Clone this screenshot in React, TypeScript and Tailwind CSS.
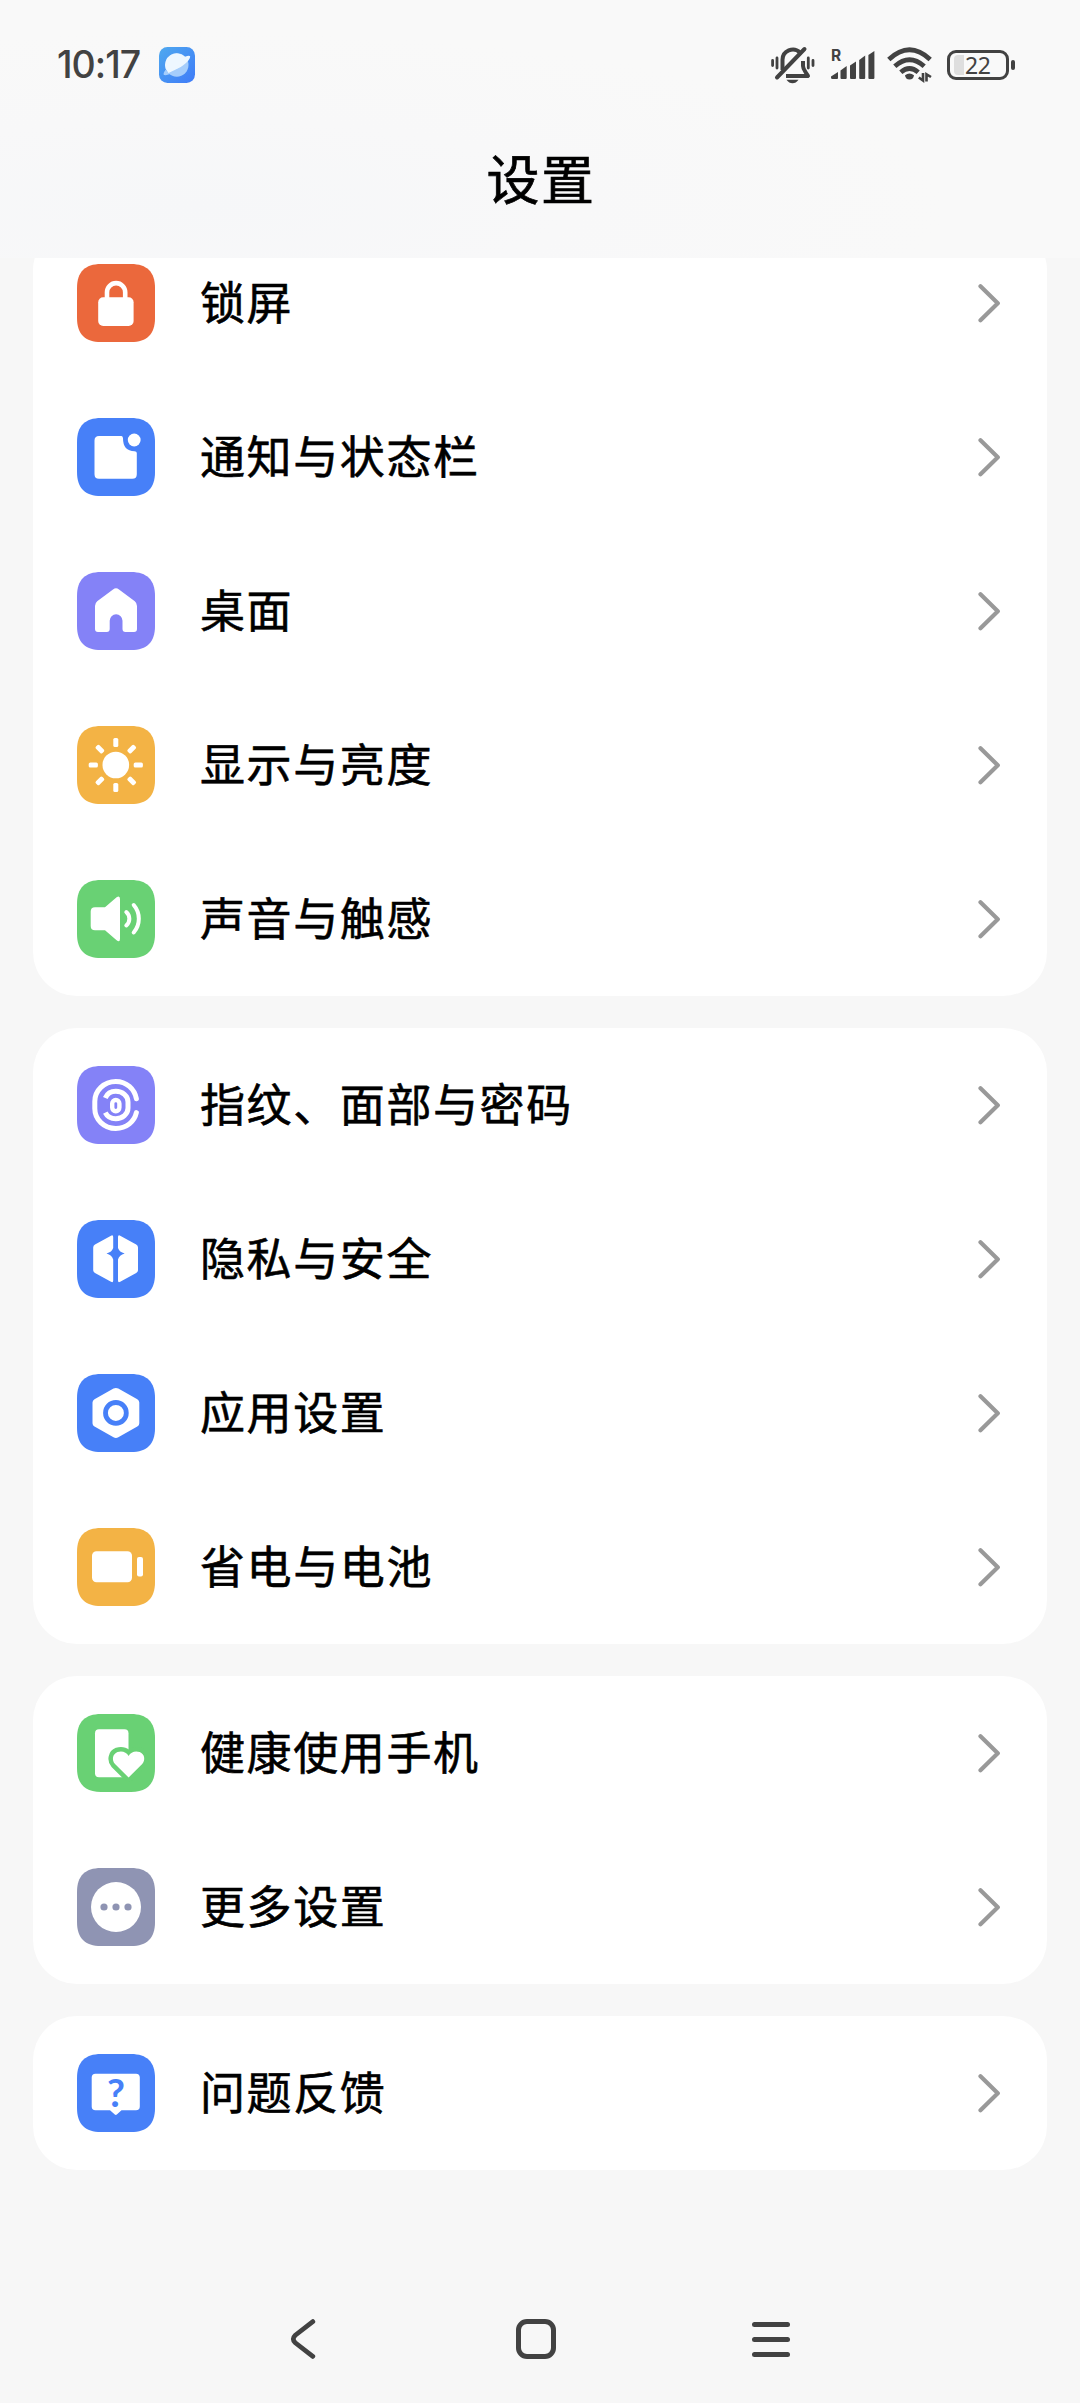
import type { ReactNode } from "react";

type Item = {
  label: string;
  color: string;
  glyph: ReactNode;
};

// All glyphs are drawn on a 78x78 tile
const LockGlyph = () => (
  <>
    <path
      d="M30 37V28.2a9.1 9.1 0 0 1 18.2 0V37"
      fill="none"
      stroke="#fff"
      strokeWidth="4.6"
    />
    <rect x="21.2" y="33.2" width="35.4" height="28.7" rx="5" fill="#fff" />
  </>
);

const NotificationGlyph = () => (
  <>
    <path
      d="M22 18H44.5Q46 18 46 20.5Q46 33 57.5 33.2Q59.8 33.3 59.8 35V56.2Q59.8 60.7 55.3 60.7H22Q17.5 60.7 17.5 56.2V22.5Q17.5 18 22 18Z"
      fill="#fff"
    />
    <circle cx="57.2" cy="22" r="6.4" fill="#fff" />
  </>
);

const HomeGlyph = () => (
  <path
    d="M36 17.4Q39 15.2 42 17.4L57.8 29.2Q60 31 60 34V57Q60 60 57 60H48.5Q45.5 60 45.5 57V48.7a6.4 6.4 0 0 0-12.8 0V57Q32.7 60 29.7 60H21Q18 60 18 57V34Q18 31 20.2 29.2Z"
    fill="#fff"
  />
);

const SunGlyph = () => (
  <g fill="#fff" transform="translate(38.8 39)">
    <circle r="13.3" />
    {[0, 45, 90, 135, 180, 225, 270, 315].map((angle) => (
      <rect
        key={angle}
        x="-2.5"
        y="-27.1"
        width="5"
        height="9.2"
        rx="1.6"
        transform={`rotate(${angle})`}
      />
    ))}
  </g>
);

const SpeakerGlyph = () => (
  <>
    <path
      d="M18 27.2H28L39.6 17.2Q43 15 43 19V58.7Q43 62.7 39.6 60.3L28 50.3H18Q13.7 50.3 13.7 46V31.5Q13.7 27.2 18 27.2Z"
      fill="#fff"
    />
    <g fill="none" stroke="#fff" strokeWidth="4" strokeLinecap="round">
      <path d="M49.3 32A9 9 0 0 1 49.3 45.5" />
      <path d="M56.7 25A21 21 0 0 1 56.7 52.5" />
    </g>
  </>
);

const FingerprintGlyph = () => (
  <g fill="none" stroke="#fff" strokeWidth="5" strokeLinecap="round">
    <path d="M59.4 32.8C57.5 23 49.5 15.5 38.8 15.5C27 15.5 17.8 24.5 17.8 35.5V42.5C17.8 53.5 27 62.5 38.8 62.5C49.5 62.5 57.5 55.5 59.4 46.6" />
    <path
      d="M28.3 32C30 28 34 25.3 38.8 25.3C45.5 25.3 51 30 51 36V42C51 48 45.5 52.7 38.8 52.7C34 52.7 30 50 28.3 46.6"
      strokeLinecap="butt"
    />
    <rect x="35.2" y="34" width="7.2" height="11.2" rx="3.6" strokeWidth="4.4" />
  </g>
);

const PrivacyGlyph = () => (
  <g fill="#fff">
    <path d="M34 15.7Q36.2 14.6 36.2 17V28Q35 32 29.5 33.5Q35 35 36.2 39.5V60.5Q36.2 63 34 61.8L18 53Q16.2 52 16.2 50V27.5Q16.2 25.5 18 24.5Z" />
    <path d="M43.2 15.7Q41 14.6 41 17V28Q42.2 32 47.7 33.5Q42.2 35 41 39.5V60.5Q41 63 43.2 61.8L59.2 53Q61 52 61 50V27.5Q61 25.5 59.2 24.5Z" />
  </g>
);

const AppsGlyph = () => (
  <>
    <path
      d="M36.5 14.6Q38.9 13.2 41.3 14.6L60.3 25.2Q62.3 26.4 62.3 28.6V49.2Q62.3 51.4 60.3 52.6L41.3 63.3Q38.9 64.7 36.5 63.3L17.5 52.6Q15.5 51.4 15.5 49.2V28.6Q15.5 26.4 17.5 25.2Z"
      fill="#fff"
    />
    <circle cx="38.9" cy="38.9" r="10.4" fill="none" stroke="#4780f8" strokeWidth="4.8" />
  </>
);

const BatteryGlyph = () => (
  <g fill="#fff">
    <rect x="15" y="23.3" width="40" height="31" rx="4.5" />
    <rect x="60" y="29" width="6" height="19.5" rx="2" />
  </g>
);

const HealthGlyph = () => (
  <>
    <rect x="18" y="15.3" width="33.5" height="48" rx="4" fill="#fff" />
    <path
      d="M51.6 63.5L38 50C34.5 46 35.5 40 40.5 38C45 36.5 49.5 38 51.6 42C53.7 38 58.2 36.5 62.7 38C67.7 40 68.7 46 65.2 50Z"
      fill="#fff"
      stroke="#69d174"
      strokeWidth="9"
      strokeLinejoin="round"
      paintOrder="stroke"
    />
  </>
);

const MoreGlyph = () => (
  <>
    <circle cx="39" cy="39" r="25" fill="#fff" />
    <g fill="#8f94b3">
      <circle cx="27" cy="39" r="3.6" />
      <circle cx="39" cy="39" r="3.6" />
      <circle cx="51" cy="39" r="3.6" />
    </g>
  </>
);

const FeedbackGlyph = () => (
  <>
    <path
      d="M18.5 19.7H59Q62.8 19.7 62.8 23.5V52.5Q62.8 56.3 59 56.3H44.5L39.8 60.6Q38.8 61.4 37.8 60.6L33 56.3H18.5Q14.7 56.3 14.7 52.5V23.5Q14.7 19.7 18.5 19.7Z"
      fill="#fff"
    />
    <text
      x="38.9"
      y="52.7"
      textAnchor="middle"
      fill="#4780f8"
      className="font-[Lato,sans-serif] text-[39px] font-bold [-webkit-text-stroke:0.6px_#4780f8]"
    >
      ?
    </text>
  </>
);

const groups: Item[][] = [
  [
    { label: "锁屏", color: "#eb683c", glyph: <LockGlyph /> },
    { label: "通知与状态栏", color: "#4780f8", glyph: <NotificationGlyph /> },
    { label: "桌面", color: "#8482f7", glyph: <HomeGlyph /> },
    { label: "显示与亮度", color: "#f3b345", glyph: <SunGlyph /> },
    { label: "声音与触感", color: "#69d174", glyph: <SpeakerGlyph /> },
  ],
  [
    { label: "指纹、面部与密码", color: "#8482f7", glyph: <FingerprintGlyph /> },
    { label: "隐私与安全", color: "#4780f8", glyph: <PrivacyGlyph /> },
    { label: "应用设置", color: "#4780f8", glyph: <AppsGlyph /> },
    { label: "省电与电池", color: "#f3b345", glyph: <BatteryGlyph /> },
  ],
  [
    { label: "健康使用手机", color: "#69d174", glyph: <HealthGlyph /> },
    { label: "更多设置", color: "#8f94b3", glyph: <MoreGlyph /> },
  ],
  [{ label: "问题反馈", color: "#4780f8", glyph: <FeedbackGlyph /> }],
];

const Row = ({ label, color, glyph }: Item) => (
  <li className="flex h-[154px] items-center pl-11 pr-[46px]">
    <svg viewBox="0 0 78 78" className="size-[78px] shrink-0">
      <path
        d="M24 0H54C70 0 78 8 78 24V54C78 70 70 78 54 78H24C8 78 0 70 0 54V24C0 8 8 0 24 0Z"
        fill={color}
      />
      {glyph}
    </svg>
    <span className="ml-[45px] flex-1 pb-1.5 text-[45px] leading-none tracking-[1.6px]">
      {label}
    </span>
    <svg
      viewBox="0 0 24 40"
      className="h-10 w-6 fill-none stroke-[#999] stroke-[4.2]"
      strokeLinecap="round"
      strokeLinejoin="round"
    >
      <path d="M3.5 3.3L20.8 20.3L3.5 37.3" />
    </svg>
  </li>
);

const StatusBar = () => (
  <div className="flex h-[130px] items-center pl-[57px] pr-[65px]">
    <span className="w-[85px] text-[37.5px] font-medium leading-none text-[#424242] font-[Inter,sans-serif] tracking-[-1px]">
      10:17
    </span>
    <svg viewBox="0 0 36 36" className="ml-[17px] size-9">
      <defs>
        <linearGradient id="planet" x1="0" y1="0" x2="1" y2="1">
          <stop offset="0" stopColor="#4fa9ef" />
          <stop offset="1" stopColor="#3f7bf8" />
        </linearGradient>
      </defs>
      <rect width="36" height="36" rx="8.5" fill="url(#planet)" />
      <circle cx="17.8" cy="18" r="11.7" fill="#a5cdfb" />
      <path
        d="M6.6 21.5A11.7 11.7 0 0 1 26 9.7Q31 7.8 31.2 9.8C31 14 20 23 9.5 26.5Z"
        fill="#eef7ff"
      />
      <path d="M6.8 22.5Q3.5 27 5 28C8 29 17 25 23 19.5L9.5 26Z" fill="#a5cdfb" />
    </svg>

    <div className="ml-auto flex items-center">
      {/* Muted bell with vibration marks */}
      <svg viewBox="0 0 44 38" className="h-[38px] w-11" fill="none" stroke="#424242">
        <path d="M11.5 24V14A10.3 10.3 0 0 1 29 6.5" strokeWidth="4" />
        <path d="M32 15V20C32 24 35 26 37 30H15" strokeWidth="4" strokeLinejoin="round" />
        <path d="M6 31.5L33.5 3" strokeWidth="4" strokeLinecap="round" />
        <path d="M15.5 33.7H27.5Q25 37.2 21.5 37.2Q18 37.2 15.5 33.7Z" fill="#424242" stroke="none" />
        <path d="M1.6 14.5V19.5M6 12V22M37.3 12V22M42 14.5V19.5" strokeWidth="2.8" strokeLinecap="round" />
      </svg>
      {/* Cellular signal, roaming */}
      <svg viewBox="0 0 44 34" className="ml-4 h-[34px] w-11 overflow-visible" fill="#424242">
        <text x="0" y="12.6" className="font-[Inter,sans-serif] text-[15.5px] font-bold">
          R
        </text>
        <path d="M0 28.5L7 24V30Q7 31 6 31H1.5Q0 31 0 29.5Z" />
        <path d="M9.5 22.5L15.7 18V30Q15.7 31 14.7 31H10.5Q9.5 31 9.5 30Z" />
        <path d="M19 17.5L25 13.5V30Q25 31 24 31H20Q19 31 19 30Z" />
        <path d="M28.2 12L34.2 7.5V30Q34.2 31 33.2 31H29.2Q28.2 31 28.2 30Z" />
        <path d="M37.4 7L43.4 3V30Q43.4 31 42.4 31H38.4Q37.4 31 37.4 30Z" />
      </svg>
      <svg viewBox="0 0 46 36" className="ml-3 h-9 w-[46px]" fill="none" stroke="#424242">
        <path d="M1.8 12.5Q22.5 -7 43.2 12.5" strokeWidth="4.8" />
        <path d="M7.8 19.3Q22.5 6.2 37.2 19.3" strokeWidth="4.8" />
        <path d="M13.8 25.3Q22.5 17.8 31.2 25.3" strokeWidth="4.8" />
        <path d="M18 28.3Q22.5 24.5 27 28.3Q26.5 32.5 22.5 32.5Q18.5 32.5 18 28.3Z" fill="#424242" stroke="none" />
        <path d="M36 26V33.5L31.8 30.5M39.5 34.5V27.3L44 30" strokeWidth="2.6" />
      </svg>
      {/* Battery */}
      <div className="ml-3.5 flex items-center gap-0.5">
        <div className="flex h-[30px] w-[62px] items-center rounded-[9px] border-[3px] border-[#424242] pl-1">
          <div className="h-5 w-[10px] rounded-l-[4px] bg-[#dedede]" />
          <span className="ml-px text-[23px] leading-none text-[#424242] font-['Noto_Sans',sans-serif] tracking-[-0.5px]">
            22
          </span>
        </div>
        <div className="h-2.5 w-1 rounded-full bg-[#424242]" />
      </div>
    </div>
  </div>
);

const NavBar = () => (
  <nav className="flex h-[128px] items-center pl-[290px] pr-[290px]">
    <svg
      viewBox="0 0 26 40"
      className="h-10 w-[26px] fill-none stroke-[#424242] stroke-[4.8]"
      strokeLinecap="round"
    >
      <path d="M22.8 2.6L5.3 16.2Q1.3 20 5.3 23.8L22.8 37.4" />
    </svg>
    <div className="ml-[200px] size-10 rounded-[11px] border-[5px] border-[#424242]" />
    <div className="ml-auto flex w-[38px] flex-col gap-2.5">
      <div className="h-[5px] rounded-full bg-[#424242]" />
      <div className="h-[5px] rounded-full bg-[#424242]" />
      <div className="h-[5px] rounded-full bg-[#424242]" />
    </div>
  </nav>
);

const App = () => {
  return (
    <div className="flex h-[2403px] w-[1080px] flex-col bg-[#f7f7f7] text-black font-['Noto_Sans_CJK_SC',sans-serif]">
      <header className="h-[258px] shrink-0 bg-[radial-gradient(ellipse_at_18%_80%,#f6f7f9_0%,#f8f8f9_30%,#f9f9f9_60%)]">
        <StatusBar />
        <h1 className="mt-[21px] pl-[2px] text-center text-[53px] leading-none tracking-[1.5px] [-webkit-text-stroke:0.7px_black]">
          设置
        </h1>
      </header>

      {/* The list is scrolled, so its first card is cut by the header */}
      <main className="flex-1 overflow-hidden px-[33px] [-webkit-text-stroke:0.6px_black]">
        <div className="-mt-8 flex flex-col gap-8">
          {groups.map((items) => (
            <ul key={items[0].label} className="rounded-[44px] bg-white">
              {items.map((item) => (
                <Row key={item.label} {...item} />
              ))}
            </ul>
          ))}
        </div>
      </main>

      <NavBar />
    </div>
  );
};

export default App;
